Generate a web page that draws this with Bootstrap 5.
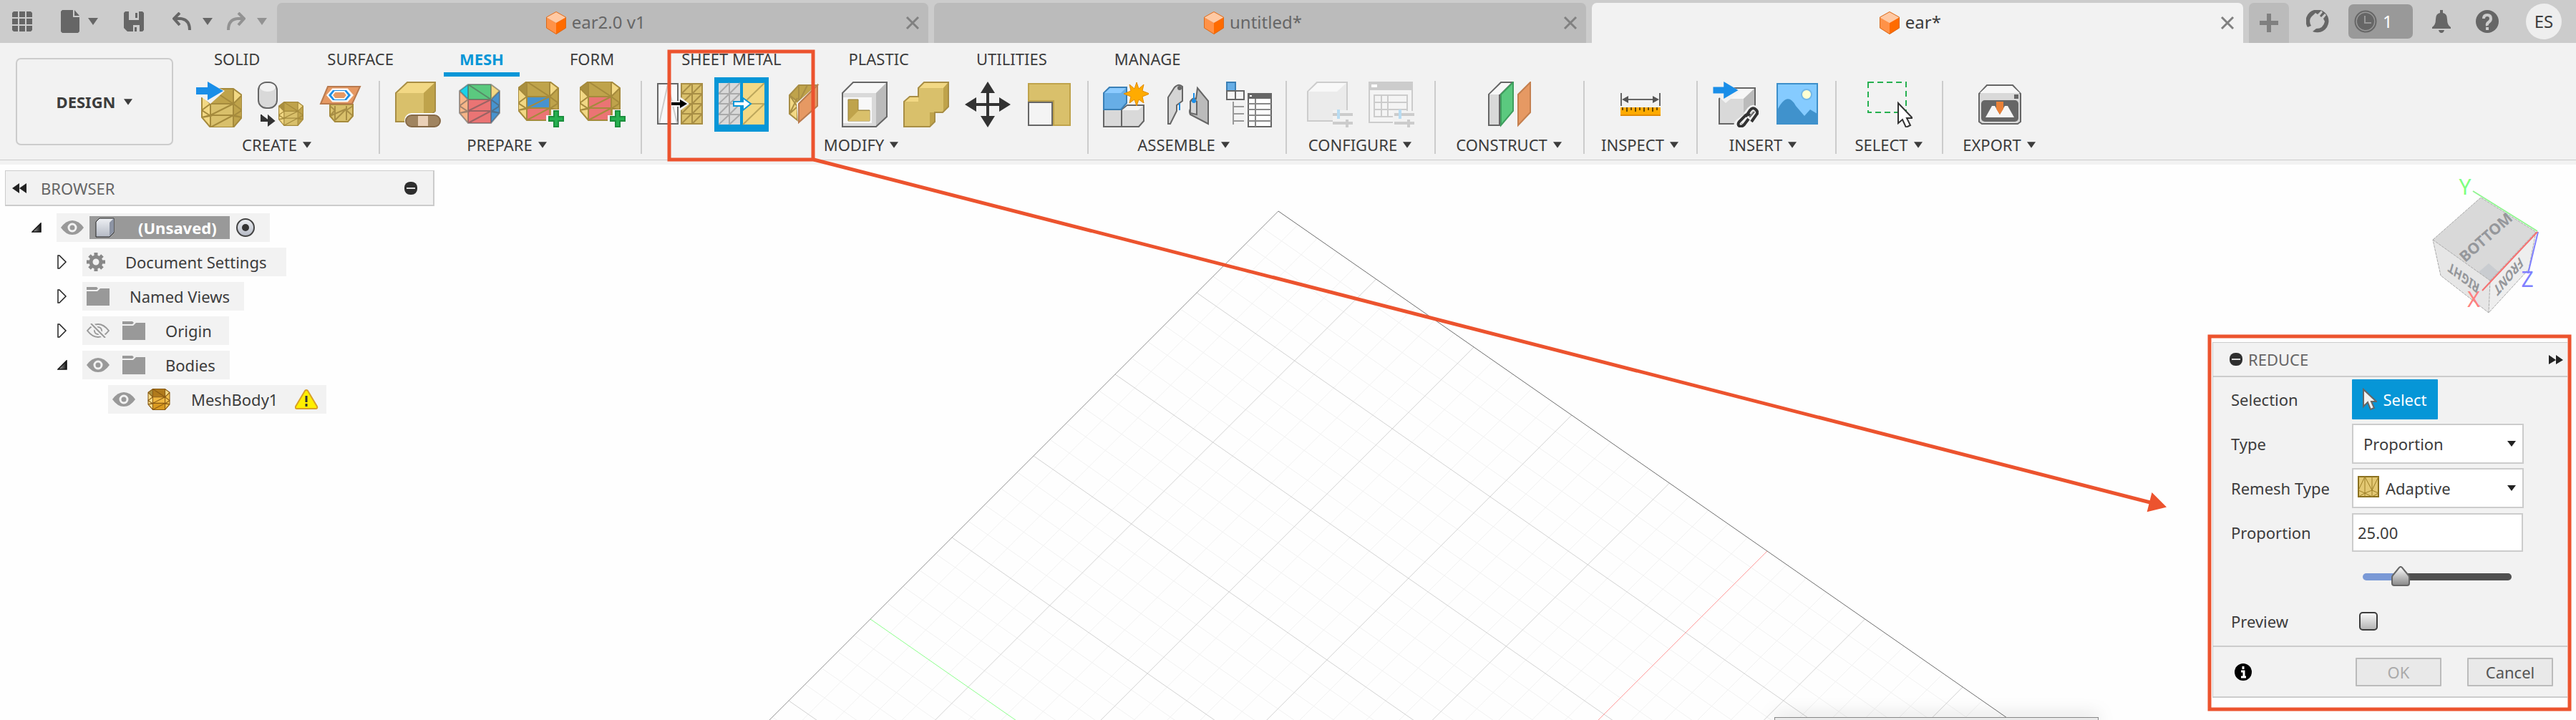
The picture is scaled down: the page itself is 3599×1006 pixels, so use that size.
<!DOCTYPE html>
<html lang="en">
<head>
<meta charset="utf-8">
<meta name="viewport" content="width=device-width, initial-scale=1">
<title>ear* - Mesh workspace</title>
<link rel="stylesheet" href="https://cdn.jsdelivr.net/npm/bootstrap@5.3.0/dist/css/bootstrap.min.css">
<style>
  body { font-family: "Noto Sans", "Open Sans", sans-serif; font-size: 22px; line-height: 30px; color: #3c3c3c; background: #fefefe; }
  button { color: inherit; }
  svg { display: block; flex: none; }
  .plain { border: 0; background: none; padding: 0; }
  /* title bar */
  .titlebar { height: 60px; background: #ccc; color: #666; }
  .quick { width: 387px; height: 56px; padding-left: 17px; }
  .faded { color: #929292; }
  .doc-tab { height: 56px; background: #bbb; border-radius: 7px 7px 0 0; padding-left: 12px; font-size: 24px; color: #666; text-decoration: none; }
  .doc-tab.active { background: #f2f2f2; color: #3c3c3c; }
  .close-x { width: 20px; margin-right: 12px; color: #808080; }
  .add-tab { width: 56px; height: 56px; background: #bbb; border-radius: 7px 7px 0 0; color: #808080; }
  .status { width: 401px; height: 56px; padding: 0 20px 0 24px; gap: 27px; }
  .jobs { width: 90px; height: 48px; background: #999; border-radius: 7px; color: #fff; padding-left: 8px; font-size: 24px; }
  .avatar { width: 50px; height: 50px; border-radius: 50%; background: #eee; color: #3c3c3c; font-size: 24px; }
  /* ribbon */
  .ribbon { height: 170px; background: #f2f2f2; }
  .ribbon-inner { height: 164px; border-bottom: 1px solid #ccc; padding-left: 22px; }
  .workspace { width: 220px; height: 122px; margin: 21px 12px 0 0; border: 2px solid #ccc; border-radius: 7px; font-weight: 700; }
  .modes { height: 47px; padding-left: 21px; gap: 46px; }
  .modes .nav-link { padding: 7px 24px 4px; color: #3c3c3c; height: 47px; border-bottom: 6px solid transparent; }
  .modes .nav-link.active { color: #0696d7; font-weight: 700; border-color: #0696d7; padding-inline: 22px; }
  .tool-group { border-right: 2px solid #ccc; height: 102px; margin-top: 6px; }
  .tool-group:last-child { border: 0; }
  .tools { height: 66px; gap: 10px; }
  .tool { width: 76px; height: 76px; display: flex; align-items: center; justify-content: center; }
  .tool.on { background: #0696d7; }
  .group-name { margin-top: 8px; height: 30px; padding-right: 10px; }
  .g-s, .g-m, .g-l { --pad: 0; }
  .g-l .group-name, .g-m .group-name, .g-s .group-name { padding-right: 2px; }
  .g-s { width: 149px } .g-m { width: 158px } .g-l { width: 208px } .g-i { width: 194px }
  .g-3 { width: 277px } .g-4 { width: 366px } .g-7 { width: 624px }
  /* browser tree */
  .browser { width: 600px; margin: 8px 0 0 7px; }
  .browser-head { height: 50px; background: #f2f2f2; border: 1px solid #ccc; border-width: 1px 2px 2px 1px; color: #666; padding: 0 22px 0 9px; }
  .tree { padding: 10px 0 0; margin: 0; list-style: none; }
  .tree li { height: 40px; margin-bottom: 8px; }
  .twist { width: 14px; margin-right: 21px; }
  .node { background: #f2f2f2; height: 40px; padding-left: 6px; padding-right: 20px; }
  .root-name { background: #999; color: #fff; font-weight: 700; height: 32px; width: 196px; padding-left: 8px; }
  .in-1 { padding-left: 37px } .in-2 { padding-left: 73px } .in-3 { padding-left: 144px }
  /* dialog */
  .reduce { top: 248px; right: 12px; width: 496px; background: #f2f2f2; border: 1px solid #ccc; border-right: 0; border-bottom-width: 2px; }
  .reduce-head { height: 48px; border-bottom: 2px solid #ccc; color: #666; padding: 0 6px 0 23px; }
  .reduce-body { height: 377px; border-bottom: 2px solid #ccc; padding-left: 25px; }
  .field { height: 62px; }
  .field > label { width: 169px; }
  .indent { padding-left: 169px; }
  .btn-pick { width: 120px; height: 56px; border-radius: 1px; background: #0696d7; color: #fff; font-size: 22px; }
  .box { width: 240px; height: 56px; border: 2px solid #ccc; background-color: #fff; border-radius: 0; color: #3c3c3c; font-size: 22px; padding: 0 14px; }
  select.box { appearance: none; background-repeat: no-repeat; background-position: 215px 22px; background-image: url("data:image/svg+xml,%3Csvg xmlns='http://www.w3.org/2000/svg' width='12' height='8'%3E%3Cpath d='M0 0h12L6 8z' fill='%23222'/%3E%3C/svg%3E"); }
  .box.iconed { padding-left: 45px; }
  .box-icon { left: 8px; top: 11px; }
  input.box { width: 239px; padding: 0 6px; height: 54px; }
  .amount { appearance: none; width: 208px; height: 28px; margin: 0 0 0 15px; background: none; }
  .amount::-webkit-slider-runnable-track { height: 10px; border-radius: 5px; background: linear-gradient(90deg, #7a99d6 25%, #505050 25%); }
  .amount::-webkit-slider-thumb { appearance: none; width: 26px; height: 28px; margin-top: -10px; background: url("data:image/svg+xml,%3Csvg xmlns='http://www.w3.org/2000/svg' width='26' height='28'%3E%3ClinearGradient id='a' x2='0' y2='1'%3E%3Cstop stop-color='%23fff'/%3E%3Cstop offset='1' stop-color='%23888'/%3E%3C/linearGradient%3E%3Cpath d='M11 2q2-2 4 0l9 11q1 1 1 3v8q0 3-3 3H4q-3 0-3-3v-8q0-2 1-3z' fill='url(%23a)' stroke='%23666' stroke-width='2'/%3E%3C/svg%3E"); }
  .tick { appearance: none; width: 26px; height: 26px; margin: 0 0 0 10px; border: 2px solid #3c3c3c; border-radius: 5px; background: linear-gradient(#f8f8f8, #b4b4b4); }
  .reduce-foot { height: 69px; padding: 0 20px 0 30px; }
  .btn-flat { width: 120px; height: 40px; border: 2px solid #bbb; border-radius: 1px; background: #e9e9e9; color: #555; }
  .btn-flat:disabled { color: #aaa; }
  .grid-art, .notes { left: 0; top: 0; width: 100%; height: 100%; pointer-events: none; }
  .cube { top: 0; right: 28px; }
  .popup-edge { left: 2479px; bottom: 0; width: 453px; height: 4px; background: #eaeaea; border: 1px solid #888; border-bottom: 0; box-shadow: 0 0 24px #0006; }
  .key { fill: none; stroke: #a88e45; stroke-width: 2; }
  .groups-face { --top: #5bc97f; --tl: #1bd3e8; --left: #f7b588; --right: #4793cf; --f1: #eb7474; --f2: #eb7474; --ln: #5558; }
  .merge-face { --f1: #4793cf; --f2: #eb7474; }
  .new-face { --f1: #eb7474; --f2: #eb7474; }
  .amber { --ln: #8a5a12; --top: #b07a1c; --f1: #efb740; --f2: #d99a20; --left: #f8dd8b; --right: #f0c050; }
</style>
<script src="https://cdn.jsdelivr.net/npm/bootstrap@5.3.0/dist/js/bootstrap.bundle.min.js"></script>
</head>
<body>
<svg width="0" height="0" class="position-absolute" aria-hidden="true">
  <defs>
    <linearGradient id="steel" x2="0" y2="1"><stop stop-color="#eef0f4"/><stop offset="1" stop-color="#b4b9c4"/></linearGradient>
    <linearGradient id="ink" x2="1"><stop stop-color="#bbb"/><stop offset="1" stop-color="#111"/></linearGradient>
  </defs>
  <symbol id="caret" viewBox="0 0 14 10"><path d="M0 0h14L7 10z" fill="currentColor"/></symbol>
  <symbol id="doc" viewBox="0 0 28 32"><path d="M14 0 28 8 14 16 0 8z" fill="#ffc9a3"/><path d="M0 8l14 8v16L0 23z" fill="#ff9248"/><path d="M28 8l-14 8v16l14-9z" fill="#ff6b00"/><path d="M14 .5 27.500 8v15L14 31.500.5 23V8z" fill="none" stroke="#d96a1c"/></symbol>
  <symbol id="xx" viewBox="0 0 20 20"><path d="M2 2l16 16M18 2 2 18" stroke="currentColor" stroke-width="3"/></symbol>
  <symbol id="mesh" viewBox="-1 -1 58 56">
    <path d="M12 0h32v21H12z" style="fill:var(--top,#bfa34b)"/><path d="M12 0v21L0 9z" style="fill:var(--tl,#a98f3f)"/><path d="M44 0v21L56 9z" style="fill:var(--tr,#f2d884)"/>
    <path d="M0 9l12 12v33L0 40z" style="fill:var(--left,#f2d884)"/><path d="M56 9 44 21v33l12-14z" style="fill:var(--right,#bfa34b)"/>
    <path d="M12 21h32v16H12z" style="fill:var(--f1,#d9c06b)"/><path d="M12 37h32v17H12z" style="fill:var(--f2,#d9c06b)"/>
    <path d="M12 0h32l12 9v31L44 54H12L0 40V9zM12 0v54M44 0v54M12 21h32M12 37h32M12 0l32 21M12 37l32-16M12 54l32-17M0 9l12 12L0 30l12 8L0 40l12-3M0 30l12-9M56 9 44 21l12 9-12 8 12 2-12-3M56 30l-12-9" fill="none" style="stroke:var(--ln,#a58a3c)" stroke-width="2"/>
  </symbol>
  <symbol id="eye" viewBox="0 0 32 20"><path d="M0 10Q7 0 16 0t16 10Q25 20 16 20T0 10z" fill="#999"/><circle cx="16" cy="10" r="5" fill="#999" stroke="#f2f2f2" stroke-width="3"/></symbol>
  <symbol id="folder" viewBox="0 0 32 26"><path d="M0 0h14l2 2-2 2H0zM0 6h15l4-4h13v24H0z" fill="#999"/></symbol>
  <symbol id="closed" viewBox="0 0 14 20"><path d="M1 1h2l9 9-9 9H1z" fill="#fff" stroke="#222" stroke-width="1.500"/></symbol>
  <symbol id="opened" viewBox="0 0 14 14"><path d="M1 13 13 1v12z" fill="url(#ink)" stroke="#111" stroke-width="1.500"/></symbol>
  <symbol id="minus" viewBox="0 0 18 18"><rect width="18" height="18" rx="8" fill="#2e2e2e"/><path d="M3 9h12" stroke="#ddd" stroke-width="2"/></symbol>
  <symbol id="plus" viewBox="0 0 22 24"><path d="M8 1h6v8h7v6h-7v8H8v-8H1V9h7z" fill="#26b050" stroke="#1b8f3d" stroke-width="2"/></symbol>
  <symbol id="import" viewBox="0 0 38 26"><path d="M0 8h16V0l22 13-22 13v-8H0z" fill="#1a8ee8"/></symbol>
</svg>

<div class="d-flex flex-column min-vh-100 position-relative overflow-hidden">
  <header class="titlebar d-flex align-items-end">
    <div class="quick d-flex align-items-center pb-1">
      <button class="plain" aria-label="Data panel"><svg width="28" height="28"><g fill="#666"><path d="M2 0h6v8H0V2zM10 0h8v8h-8zM20 0h6l2 2v6h-8zM0 10h8v8H0zM10 10h8v8h-8zM20 10h8v8h-8zM0 20h8v8H2l-2-2zM10 20h8v8h-8zM20 20h8v6l-2 2h-6z"/></g></svg></button>
      <button class="plain d-flex align-items-center ms-4 ps-3" aria-label="File"><svg width="26" height="32"><path d="M2 0h15v10h9v20l-2 2H2l-2-2V2zM19 0l7 8h-7z" fill="#666"/></svg><svg class="ms-2 ps-1" width="18" height="10"><use href="#caret"/></svg></button>
      <button class="plain ms-4 ps-2" aria-label="Save"><svg width="32" height="28" viewBox="-4 0 32 28"><path d="M2 0h5v12h14V0h5l2 2v24l-2 2h-4v-9h-9v9H5l-5-5V2zM16 2h3v7h-3zM15 22h3v6h-3z" fill="#666"/></svg></button>
      <button class="plain d-flex align-items-center ms-4 ps-3" aria-label="Undo"><svg width="26" height="26"><path d="M10 1 2 9l8 9M3 9h8q13 1 13 16" fill="none" stroke="#666" stroke-width="4"/></svg><svg class="ms-3" width="14" height="10"><use href="#caret"/></svg></button>
      <button class="plain faded d-flex align-items-center ms-3 ps-1" aria-label="Redo"><svg width="26" height="26"><path d="M16 1l8 8-8 9M23 9h-8Q2 10 2 25" fill="none" stroke="#929292" stroke-width="4"/></svg><svg class="ms-3" width="14" height="10"><use href="#caret"/></svg></button>
    </div>
    <nav class="d-flex flex-fill gap-2" aria-label="Documents">
      <a href="#" class="doc-tab d-flex align-items-center flex-fill w-100"><span class="d-flex flex-fill justify-content-center gap-2"><svg width="28" height="32"><use href="#doc"/></svg>ear2.0 v1</span><svg class="close-x" height="20"><use href="#xx"/></svg></a>
      <a href="#" class="doc-tab d-flex align-items-center flex-fill w-100"><span class="d-flex flex-fill justify-content-center gap-2"><svg width="28" height="32"><use href="#doc"/></svg>untitled*</span><svg class="close-x" height="20"><use href="#xx"/></svg></a>
      <a href="#" class="doc-tab active d-flex align-items-center flex-fill w-100"><span class="d-flex flex-fill justify-content-center gap-2"><svg width="28" height="32"><use href="#doc"/></svg>ear*</span><svg class="close-x" height="20"><use href="#xx"/></svg></a>
    </nav>
    <button class="plain add-tab ms-2 d-flex align-items-center justify-content-center" aria-label="New design"><svg width="26" height="26"><path d="M10 0h6v10h10v6H16v10h-6V16H0v-6h10z" fill="#808080"/></svg></button>
    <div class="status d-flex align-items-center pb-1">
      <button class="plain" aria-label="Extensions"><svg width="32" height="32"><path d="M2 24A16 16 0 1 1 9 30l5-4q10 0 12-10l-2-4 4-5-2-2-5 5-2-2 4-5-2-2-5 5-3-2-3 3q-8 6-3 15z" fill="#666"/></svg></button>
      <button class="plain jobs d-flex align-items-center gap-2" aria-label="Job status"><svg width="32" height="32"><circle cx="16" cy="16" r="14.500" fill="none" stroke="#666" stroke-width="2"/><circle cx="16" cy="16" r="12" fill="#666"/><path d="M15 8v10h9" fill="none" stroke="#999" stroke-width="2"/></svg>1</button>
      <button class="plain" aria-label="Notifications"><svg width="26" height="32"><path d="M11 0h4v4q6 1 6 9 0 8 5 11v2H0v-2q5-3 5-11 0-8 6-9zM9 28h8q-1 4-4 4t-4-4z" fill="#666"/></svg></button>
      <button class="plain ms-2" aria-label="Help"><svg width="32" height="32"><circle cx="16" cy="16" r="16" fill="#666"/><path d="M11 12q0-5 5-5t5 5q0 3-3 5t-2 5M16 24v4" fill="none" stroke="#ccc" stroke-width="4"/></svg></button>
      <button class="plain avatar ms-auto">ES</button>
    </div>
  </header>

  <section class="ribbon">
    <div class="ribbon-inner d-flex">
      <button class="workspace bg-transparent d-flex align-items-center justify-content-center gap-2">DESIGN <svg class="ms-1" width="12" height="9"><use href="#caret"/></svg></button>
      <div>
        <ul class="nav modes flex-nowrap">
          <li><a class="nav-link" href="#">SOLID</a></li><li><a class="nav-link" href="#">SURFACE</a></li><li><a class="nav-link active" href="#">MESH</a></li><li><a class="nav-link" href="#">FORM</a></li><li><a class="nav-link" href="#">SHEET METAL</a></li><li><a class="nav-link" href="#">PLASTIC</a></li><li><a class="nav-link" href="#">UTILITIES</a></li><li><a class="nav-link" href="#">MANAGE</a></li>
        </ul>
        <div class="d-flex">
          <div class="tool-group g-3">
            <div class="tools d-flex align-items-center justify-content-center">
              <button class="plain tool" aria-label="Insert mesh"><svg width="64" height="64"><use href="#mesh" x="7" y="9" width="58" height="56"/><path d="M0 6h14V0l26 13-20 18-12-9H0z" fill="#f2f2f2"/><use href="#import" width="38" height="26"/></svg></button>
              <button class="plain tool" aria-label="Tessellate"><svg width="64" height="64"><rect x="1" y="1" width="26" height="36" rx="11" fill="#d9d9d9" stroke="#666" stroke-width="2"/><ellipse cx="14" cy="8" rx="11" ry="6" fill="#f2f2f2"/><path d="M5 46v9h12M15 48l8 7-8 6z" fill="#333" stroke="#333" stroke-width="2"/><use href="#mesh" x="29" y="25" width="35" height="40"/></svg></button>
              <button class="plain tool" aria-label="Mesh section"><svg width="64" height="64"><path d="M15 32h32v16l-7 8H22l-7-8z" fill="#d9c06b" stroke="#a58a3c" stroke-width="2"/><path d="M22 34v20M38 34v20M15 34l7 6-7 8 23-10-16 16M47 34l-9 6 9 8" class="key"/><path d="M12 7h45L46 31H2z" fill="#e69963" stroke="#b97a4e" stroke-width="2"/><path d="M12 19l7-8h20l7 8-7 8H19z" fill="#f8f8f8" stroke="#f8f8f8" stroke-width="3"/><path d="M13 19l6-7h19l6 7-6 7H19z" fill="#1a8ee8"/><path d="M18 19l4-5h13l4 5-4 5H22z" fill="#e69963" stroke="#f8f8f8" stroke-width="2"/></svg></button>
            </div>
            <div class="group-name text-center"><button class="plain d-inline-flex align-items-center gap-2">CREATE<svg width="12" height="9"><use href="#caret"/></svg></button></div>
          </div>
          <div class="tool-group g-4">
            <div class="tools d-flex align-items-center justify-content-center">
              <button class="plain tool" aria-label="Repair"><svg width="64" height="64"><path d="M1 16 17 1h39v40L40 56H1z" fill="#d9c06b"/><path d="M1 16 17 1h39L40 16z" fill="#f2d884"/><path d="M56 1v40L40 56V16z" fill="#bfa34b"/><path d="M1 16 17 1h39v40L40 56H1z" class="key"/><rect x="13" y="44" width="52" height="21" rx="10" fill="#f8f8f8"/><rect x="15" y="47" width="48" height="16" rx="8" fill="#a08460" stroke="#866947" stroke-width="2"/><path d="M32 48h14v14H32z" fill="#ead0b7"/></svg></button>
              <button class="plain tool" aria-label="Generate face groups"><svg class="groups-face" width="64" height="64"><use href="#mesh" x="3" y="3" width="58" height="56"/></svg></button>
              <button class="plain tool" aria-label="Combine face groups"><svg class="merge-face" width="64" height="64"><use href="#mesh" x="-1" y="-1" width="58" height="56"/><path d="M39 47h7v-8h12v8h8v17H39z" fill="#f2f2f2"/><use href="#plus" x="42" y="40" width="22" height="24"/></svg></button>
              <button class="plain tool" aria-label="Create face group"><svg class="new-face" width="64" height="64"><use href="#mesh" x="-1" y="-1" width="58" height="56"/><path d="M39 47h7v-8h12v8h8v17H39z" fill="#f2f2f2"/><use href="#plus" x="42" y="40" width="22" height="24"/></svg></button>
            </div>
            <div class="group-name text-center"><button class="plain d-inline-flex align-items-center gap-2">PREPARE<svg width="12" height="9"><use href="#caret"/></svg></button></div>
          </div>
          <div class="tool-group g-7">
            <div class="tools d-flex align-items-center justify-content-center">
              <button class="plain tool" aria-label="Remesh"><svg width="64" height="64"><path d="M1 3h28v56H1z" fill="#f8f8f8" stroke="#666" stroke-width="2"/><path d="M3 58 15 4l13 54" fill="none" stroke="#ccc" stroke-width="2"/><path d="M34 3h29v56H34z" fill="#d9c06b"/><path d="M34 3h29v56H34zM49 3v56M34 17h29M34 31h29M34 45h29M34 17 48 3M49 17 63 3M34 31l14-14M49 31l14-14M34 45l14-14M49 45l14-14M34 59l14-14M49 59l14-14" class="key"/><path d="M18 27h14v-6l13 10-13 10v-6H18z" fill="#f2f2f2"/><path d="M20 29h12v-4l10 6-10 6v-4H20z" fill="#000"/></svg></button>
              <button class="plain tool on" aria-label="Reduce"><svg width="64" height="64"><path d="M0 2h30v58H0z" fill="#d9d9d9"/><path d="M15 2v58M0 17h30M0 31h30M0 46h30M0 17 15 2M15 17 30 2M0 31l15-14M15 31l15-14M0 46l15-15M15 46l15-15M0 60l15-14M15 60l15-14" stroke="#aaa" stroke-width="2"/><path d="M34 2h30v58H34z" fill="#f2d884"/><path d="M34 31h30M34 31 64 2M34 60l30-29" stroke="#bda75c" stroke-width="2"/><path d="M21 28h13v-5l11 8-11 9v-6H21z" fill="#fff" stroke="#0696d7" stroke-width="2"/></svg></button>
              <button class="plain tool" aria-label="Plane cut"><svg width="64" height="64"><path d="M13 19 26 5h26L24 30v24L13 45z" fill="#f2d884"/><path d="M13 19 26 5h26L24 30z" fill="#bfa34b"/><path d="M13 19 26 5h26L24 30v24L13 45zM26 5v24M13 19l13 10 12-24M13 19l11 16-11 10 11-22" class="key"/><path d="M23 30 53 3v32L25 60z" fill="#f2f2f2"/><path d="M26 31 52 5v29L26 57z" fill="#e69963" stroke="#b97a4e" stroke-width="2"/></svg></button>
              <button class="plain tool" aria-label="Shell"><svg width="64" height="64"><path d="M1 16 16 1h47v48L48 63H1z" fill="#d9d9d9"/><path d="M1 16 16 1h47L48 16z" fill="#f6f6f6"/><path d="M63 1v48L48 63V16z" fill="#bbb"/><path d="M1 16 16 1h47v48L48 63H1z" fill="none" stroke="#666" stroke-width="2"/><path d="M2 22h40v36H2z" fill="#f8f8f8"/><path d="M9 55V25h14v15h16v15z" fill="#bfa34b" stroke="#96803b"/><path d="M9 55 23 41h16v14z" fill="#d9c06b"/></svg></button>
              <button class="plain tool" aria-label="Combine"><svg width="64" height="64"><path d="M1 28 9 21h12V9l8-8h34v34l-8 8H44v13l-7 7H1z" fill="#d9c06b"/><path d="M1 28l8-7h12v7zM21 9l8-8h34l-7 8z" fill="#f2d884"/><path d="M63 1v34l-7 8V9zM37 43h7v13l-7 7z" fill="#bfa34b"/><path d="M1 28 9 21h12V9l8-8h34v34l-8 8H44v13l-7 7H1z" class="key"/></svg></button>
              <button class="plain tool" aria-label="Move"><svg width="64" height="64"><path d="M32 0l10 16h-8v14h14v-8l16 10-16 10v-8H34v14h8L32 64 22 48h8V34H16v8L0 32l16-10v8h14V16h-8z" fill="#333"/></svg></button>
              <button class="plain tool" aria-label="Scale"><svg width="64" height="64"><path d="M3 3h58v58H38V27H3z" fill="#d9c06b" stroke="#bfa34b" stroke-width="2"/><path d="M3 29h33v32H3z" fill="#f4f4f4" stroke="#666" stroke-width="2"/></svg></button>
            </div>
            <div class="group-name text-center"><button class="plain d-inline-flex align-items-center gap-2">MODIFY<svg width="12" height="9"><use href="#caret"/></svg></button></div>
          </div>
          <div class="tool-group g-3">
            <div class="tools d-flex align-items-center justify-content-center">
              <button class="plain tool" aria-label="New component"><svg width="64" height="64"><path d="M1 39h25v24H1z" fill="#d9d9d9" stroke="#666" stroke-width="2"/><path d="M26 39l8-6h23v22l-7 8H26z" fill="#d9d9d9" stroke="#666" stroke-width="2"/><path d="M27 40h22l7-6H34z" fill="#f4f4f4"/><path d="M1 16 9 8h24v22l-8 9H1z" fill="#67aee6" stroke="#3a7fb5" stroke-width="2"/><path d="M2 16l8-7h22l-7 7z" fill="#8ccbff"/><path d="M47 1l3 9 7-6-2 9 10 4-10 4 2 9-7-5-3 9-3-9-7 5 2-9-10-4 10-4-2-9 7 6z" fill="#ffab00" stroke="#e28b00"/></svg></button>
              <button class="plain tool" aria-label="Joint"><svg width="64" height="64"><path d="M5 22 14 8q6-6 11-1v20l-8 6v8L8 59H5z" fill="#d4d4d4" stroke="#666" stroke-width="2"/><path d="M46 9l15 18v32L36 46q-2-4 0-8V28q3-6 8-4z" fill="#bbb" stroke="#666" stroke-width="2"/><path d="M36 28q4-5 9 0v18l-9-2z" fill="#d4d4d4" stroke="#666" stroke-width="2"/><circle cx="21" cy="9" r="3" fill="#666"/><circle cx="41" cy="27" r="3" fill="#1a8ee8"/><path d="M21 30v10M41 16v10" stroke="#1a8ee8" stroke-width="2"/></svg></button>
              <button class="plain tool" aria-label="Bill of materials"><svg width="64" height="64"><path d="M1 1h12v12H1z" fill="#67aee6" stroke="#3a7fb5" stroke-width="2"/><path d="M1 13h12v12H1zM13 13h12v12H13z" fill="#f6f6f6" stroke="#666" stroke-width="2"/><path d="M10 28v32M10 35h15M10 45h15M10 55h15" stroke="#999" stroke-width="2"/><path d="M31 17h32v46H31z" fill="#fff" stroke="#666" stroke-width="2"/><path d="M31 17h32v7H31z" fill="#666"/><path d="M33 20h3" stroke="#fff" stroke-width="2"/><path d="M31 31h32M31 39h32M31 47h32M31 55h32M41 24v39" stroke="#888" stroke-width="2"/></svg></button>
            </div>
            <div class="group-name text-center"><button class="plain d-inline-flex align-items-center gap-2">ASSEMBLE<svg width="12" height="9"><use href="#caret"/></svg></button></div>
          </div>
          <div class="tool-group g-l">
            <div class="tools d-flex align-items-center justify-content-center">
              <button class="plain tool" aria-label="Configure"><svg width="64" height="64"><path d="M1 14 14 1h42v39L42 55H1z" fill="#ebebeb" stroke="#ccc" stroke-width="2"/><path d="M2 14 15 2h40L42 14z" fill="#f8f8f8"/><path d="M36 40h30v24H36z" fill="#f2f2f2"/><path d="M36 46h28M36 58h28M56 53v11" stroke="#ccc" stroke-width="4"/><path d="M44 39v13" stroke="#b8dcf2" stroke-width="4"/></svg></button>
              <button class="plain tool" aria-label="Configuration table"><svg width="64" height="64"><path d="M1 1h60v56H1z" fill="#f4f4f4" stroke="#ccc" stroke-width="2"/><path d="M1 1h60v11H1z" fill="#ccc"/><path d="M4 4h8v4H4z" fill="#fff"/><path d="M8 19h46v30H8zM8 29h46M8 39h46M18 19v30M27 19v30" fill="none" stroke="#ccc" stroke-width="2"/><path d="M34 41h30v23H34z" fill="#f2f2f2"/><path d="M36 46h28M36 58h28M56 53v11" stroke="#ccc" stroke-width="4"/><path d="M44 39v13" stroke="#b8dcf2" stroke-width="4"/></svg></button>
            </div>
            <div class="group-name text-center"><button class="plain d-inline-flex align-items-center gap-2">CONFIGURE<svg width="12" height="9"><use href="#caret"/></svg></button></div>
          </div>
          <div class="tool-group g-l">
            <div class="tools d-flex align-items-center justify-content-center">
              <button class="plain tool" aria-label="Offset plane"><svg width="64" height="64"><path d="M3 18 20 1h15L18 18v43H3z" fill="#d9d9d9" stroke="#666" stroke-width="2"/><path d="M4 18 21 2h13L18 18z" fill="#f8f8f8"/><path d="M20 18 37 1v40L20 61z" fill="#5bc97f" stroke="#3d9e5d" stroke-width="2"/><path d="M44 18 61 1v42L44 61z" fill="#e69963" stroke="#c47f4e" stroke-width="2"/></svg></button>
            </div>
            <div class="group-name text-center"><button class="plain d-inline-flex align-items-center gap-2">CONSTRUCT<svg width="12" height="9"><use href="#caret"/></svg></button></div>
          </div>
          <div class="tool-group g-m">
            <div class="tools d-flex align-items-center justify-content-center">
              <button class="plain tool" aria-label="Measure"><svg width="64" height="64"><path d="M5 16v18M59 16v18M9 25h46" stroke="#666" stroke-width="2"/><path d="M6 25l9-5v10zM58 25l-9-5v10z" fill="#555"/><path d="M4 36h56v12H4z" fill="#ffab00"/><path d="M4 46h56v2H4z" fill="#e28b00"/><path d="M7 36v4M13 36v6M19 36v4M25 36v6M31 36v4M37 36v6M43 36v4M49 36v6M55 36v4" stroke="#6b4a00" stroke-width="2"/></svg></button>
            </div>
            <div class="group-name text-center"><button class="plain d-inline-flex align-items-center gap-2">INSPECT<svg width="12" height="9"><use href="#caret"/></svg></button></div>
          </div>
          <div class="tool-group g-i">
            <div class="tools d-flex align-items-center justify-content-center">
              <button class="plain tool" aria-label="Insert derive"><svg width="64" height="64"><path d="M9 24 25 9h34v32L43 59H9z" fill="#d9d9d9" stroke="#666" stroke-width="2"/><path d="M10 24 26 10h32L43 24z" fill="#f6f6f6"/><path d="M58 10v30L43 58V24z" fill="#bbb"/><path d="M0 6h14V0l24 13-20 17-9-8H0z" fill="#f2f2f2"/><use href="#import" width="36" height="24"/><path d="M46 47l6-8q4-4 9 0 4 4 0 8l-7 8M50 47l-4 2-10 7q-5 5 0 6 4 3 9-2l7-9" fill="none" stroke="#f2f2f2" stroke-width="8"/><path d="M46 49l6-9q4-5 8-1t1 7l-7 10M52 47q-4-3-8 2l-7 7q-3 4 0 6t7-2l6-8" fill="none" stroke="#333" stroke-width="4"/></svg></button>
              <button class="plain tool" aria-label="Insert image"><svg width="64" height="64"><path d="M4 3h56v56H4z" fill="#85cbff" stroke="#3d8fca" stroke-width="2"/><path d="M4 40Q18 12 30 34l12 14 8-9 10 6v14H4z" fill="#4092cc"/><circle cx="45" cy="18" r="7" fill="#ffffd2" stroke="#73b7e8" stroke-width="2"/></svg></button>
            </div>
            <div class="group-name text-center"><button class="plain d-inline-flex align-items-center gap-2">INSERT<svg width="12" height="9"><use href="#caret"/></svg></button></div>
          </div>
          <div class="tool-group g-s">
            <div class="tools d-flex align-items-center justify-content-center">
              <button class="plain tool" aria-label="Select"><svg width="64" height="64"><path d="M2 1h53v42H2z" fill="none" stroke="#26b050" stroke-width="2" stroke-dasharray="8 5"/><path d="M44 30v28l6-5 5 11 6-3-5-10h8z" fill="#fff" stroke="#333" stroke-width="2"/></svg></button>
            </div>
            <div class="group-name text-center"><button class="plain d-inline-flex align-items-center gap-2">SELECT<svg width="12" height="9"><use href="#caret"/></svg></button></div>
          </div>
          <div class="tool-group g-m">
            <div class="tools d-flex align-items-center justify-content-center">
              <button class="plain tool" aria-label="3D print"><svg width="64" height="64"><path d="M3 17 14 5h36l11 12v39l-4 3H7l-4-3z" fill="#d9d9d9" stroke="#666" stroke-width="2"/><path d="M4 16 15 6h34l11 10z" fill="#f6f6f6"/><path d="M52 18h6v6h-6z" fill="#666"/><rect x="6" y="26" width="52" height="30" rx="5" fill="#666"/><path d="M12 50l9-16h4l7 12 7-12h4l9 16z" fill="#f6f6f6"/><path d="M27 28h10v10l-5 8-5-8z" fill="#ea8137"/></svg></button>
            </div>
            <div class="group-name text-center"><button class="plain d-inline-flex align-items-center gap-2">EXPORT<svg width="12" height="9"><use href="#caret"/></svg></button></div>
          </div>
        </div>
      </div>
    </div>
  </section>

  <main class="flex-grow-1 position-relative overflow-hidden">
    <svg class="grid-art position-absolute" id="floor" aria-hidden="true"></svg>
    <div class="popup-edge position-absolute"></div>

    <aside class="browser position-relative">
      <div class="browser-head d-flex align-items-center"><svg width="20" height="14"><path d="M10 0v14L0 7zM20 0v14L10 7z" fill="#222"/></svg><span class="ms-3 ps-1 flex-fill">BROWSER</span><svg width="18" height="18"><use href="#minus"/></svg></div>
      <ul class="tree">
        <li class="d-flex align-items-center in-1"><svg class="twist" height="14"><use href="#opened"/></svg>
          <div class="node d-flex align-items-center"><svg width="32" height="20"><use href="#eye"/></svg>
            <span class="root-name d-flex align-items-center ms-2 me-2 mx-2"><svg class="me-4" width="28" height="28"><path d="M1 6 6 1h20v20l-6 6H1z" fill="url(#steel)" stroke="#222"/><path d="M20 7v19l6-6V1z" fill="#8c93a3"/></svg><span class="ps-2">(Unsaved)</span></span>
            <svg width="28" height="28"><circle cx="14" cy="14" r="12" fill="url(#steel)" stroke="#444" stroke-width="2"/><circle cx="14" cy="14" r="5" fill="#333"/></svg></div></li>
        <li class="d-flex align-items-center in-2"><svg class="twist" height="20"><use href="#closed"/></svg>
          <div class="node d-flex align-items-center"><svg width="26" height="26"><circle cx="13" cy="13" r="7" fill="none" stroke="#888" stroke-width="5"/><path d="M13 0v5M13 21v5M0 13h5M21 13h5M4 4l4 4M18 18l4 4M22 4l-4 4M8 18l-4 4" stroke="#888" stroke-width="5"/></svg><span class="ms-4 ps-1 pe-2">Document Settings</span></div></li>
        <li class="d-flex align-items-center in-2"><svg class="twist" height="20"><use href="#closed"/></svg>
          <div class="node d-flex align-items-center"><svg width="32" height="26"><use href="#folder"/></svg><span class="ms-4 ps-1">Named Views</span></div></li>
        <li class="d-flex align-items-center in-2"><svg class="twist" height="20"><use href="#closed"/></svg>
          <div class="node d-flex align-items-center"><svg width="32" height="20"><path d="M1 10Q8 1 16 1t15 9Q24 19 16 19T1 10z" fill="none" stroke="#999" stroke-width="2"/><circle cx="16" cy="10" r="5" fill="none" stroke="#999" stroke-width="2"/><path d="M6 0l20 20" stroke="#f2f2f2" stroke-width="6"/><path d="M6 0l20 20" stroke="#999" stroke-width="2"/></svg><svg class="ms-3" width="34" height="26" viewBox="-2 0 34 26"><use href="#folder" width="32" height="26"/></svg><span class="ms-4 ps-1 pe-1">Origin</span></div></li>
        <li class="d-flex align-items-center in-2"><svg class="twist" height="14"><use href="#opened"/></svg>
          <div class="node d-flex align-items-center"><svg width="32" height="20"><use href="#eye"/></svg><svg class="ms-3" width="34" height="26" viewBox="-2 0 34 26"><use href="#folder" width="32" height="26"/></svg><span class="ms-4 ps-1">Bodies</span></div></li>
        <li class="d-flex align-items-center in-3">
          <div class="node d-flex align-items-center pe-2"><svg width="32" height="20"><use href="#eye"/></svg><svg class="ms-3 amber" width="34" height="30"><use href="#mesh"/></svg><span class="ms-4 ps-1 me-4">MeshBody1</span><svg width="36" height="28"><path d="M14 2q2-2 4 0l13 22q1 3-2 3H3q-3 0-2-3z" fill="#ffef00" stroke="#d9a026" stroke-width="2"/><path d="M16 9v9M16 20v4" stroke="#333" stroke-width="3"/></svg></div></li>
      </ul>
    </aside>

    <svg class="cube position-absolute" width="200" height="218" viewBox="3371 230 200 218" role="img" aria-label="View cube">
      <path d="M3399 335l80 57-2 45-67-52z" fill="#e6e6e6"/><path d="M3479 392l64-68-10 52-56 61z" fill="#eee"/><path d="M3466 276l77 48-64 68-80-57z" fill="#d9d9d9"/>
      <path d="M3463 380l14-12 14 12-12 12z" fill="#c9ccd0"/>
      <path d="M3399 335l67-59 77 48-10 52-56 61-67-52zl80 57-2 45M3479 392l64-68" fill="none" stroke="#aaa" stroke-dasharray="4 1"/>
      <g fill="#95979b" font-weight="700" text-anchor="middle" font-family="Noto Sans, sans-serif">
        <text font-size="21" transform="translate(3478 337) rotate(-42)">BOTTOM</text>
        <text font-size="17" transform="translate(3444 382) rotate(217) skewX(20)">RIGHT</text>
        <text font-size="17" transform="translate(3502 380) rotate(130) skewX(-25)">FRONT</text>
      </g>
      <path d="M3455 267l90 56" stroke="#90f590" stroke-width="2"/><path d="M3546 324l-14 58" stroke="#8080ff" stroke-width="2"/><path d="M3545 324l-77 82" stroke="#f47070" stroke-width="2"/>
      <g font-size="30" font-family="Noto Sans, sans-serif" text-anchor="middle"><text x="3444" y="272" fill="#80ff80">Y</text><text x="3456" y="429" fill="#ff8080">X</text><text x="3531" y="401" fill="#8080ff">Z</text></g>
    </svg>

    <form class="reduce position-absolute" onsubmit="return false">
      <div class="reduce-head d-flex align-items-center"><svg width="18" height="18"><use href="#minus"/></svg><span class="ms-2 flex-fill">REDUCE</span><svg width="20" height="13"><path d="M0 0v13l10-6zM10 0v13l10-6z" fill="#222"/></svg></div>
      <div class="reduce-body">
        <div class="field d-flex align-items-center"><label for="pick">Selection</label><button type="button" id="pick" class="plain btn-pick d-flex align-items-center justify-content-center gap-2"><svg width="20" height="32"><path d="M1 2v24l6-6 4 10 5-2-4-9h7z" fill="#f2f2f2" stroke="#666" stroke-width="2"/></svg>Select</button></div>
        <div class="field d-flex align-items-center"><label for="kind">Type</label><select id="kind" class="box"><option>Proportion</option></select></div>
        <div class="field d-flex align-items-center"><label for="remesh">Remesh Type</label><div class="position-relative"><select id="remesh" class="box iconed"><option>Adaptive</option></select><svg class="box-icon position-absolute" width="30" height="32"><path d="M1 1h28v28H1z" fill="#e3c873" stroke="#8a701f" stroke-width="2"/><path d="M1 20 10 1l10 19L29 1M10 1v28M20 1v28M1 20l9 4 10-4 9 4M1 29l9-5 10 5 9-5" fill="none" stroke="#9c7f27"/></svg></div></div>
        <div class="field d-flex align-items-center"><label for="ratio">Proportion</label><input id="ratio" class="box" value="25.00"></div>
        <div class="field d-flex align-items-center indent"><input class="amount" type="range" min="0" max="100" value="22" aria-label="Proportion slider"></div>
        <div class="field d-flex align-items-center"><label for="preview">Preview</label><input id="preview" class="tick" type="checkbox"></div>
      </div>
      <div class="reduce-foot d-flex align-items-center justify-content-between"><svg width="24" height="24"><circle cx="12" cy="12" r="12" fill="#000"/><path d="M12 4v4M9 11h4v8M9 19h7" fill="none" stroke="#fff" stroke-width="3"/></svg>
        <div class="d-flex gap-4"><button class="plain btn-flat me-2" disabled>OK</button><button type="button" class="plain btn-flat ms-1">Cancel</button></div></div>
    </form>
  </main>

  <svg class="notes position-absolute" aria-hidden="true" stroke="#ec532e" stroke-width="5">
    <path d="M935 72h201v151H935zM3087 470h503v521H3087z" fill="none"/><path d="M1137 223 3004 702" fill="none"/><path d="M3025 708l-24 6 6-24z" fill="#ec532e" stroke-width="2"/>
  </svg>
</div>
<script>
  // Ground plane: 10 x 10 major cells of five minor cells each.
  const origin = [1786, 65], u = [-22.8, 22.8], v = [27.32, 19], count = 50;
  const at = (i, j) => [origin[0] + u[0] * i + v[0] * j, origin[1] + u[1] * i + v[1] * j].join(' ');
  const paths = { '#f1f1f1': '', '#d2d2d2': '', '#ff9c9c': '', '#8cff8c': '', '#999': '', '#6e6e6e': '' };
  for (let k = 0; k <= count; k++) {
    const inner = k % 5 ? '#f1f1f1' : '#d2d2d2';
    const edge = k === 0 || k === count;
    paths[k === 25 ? '#8cff8c' : edge ? '#6e6e6e' : inner] += `M${at(k, 0)}L${at(k, count)}`;
    paths[k === 25 ? '#ff9c9c' : edge ? '#999' : inner] += `M${at(0, k)}L${at(count, k)}`;
  }
  document.getElementById('floor').innerHTML = Object.entries(paths).map(([c, d]) => `<path d="${d}" stroke="${c}" fill="none"/>`).join('');
</script>
</body>
</html>
